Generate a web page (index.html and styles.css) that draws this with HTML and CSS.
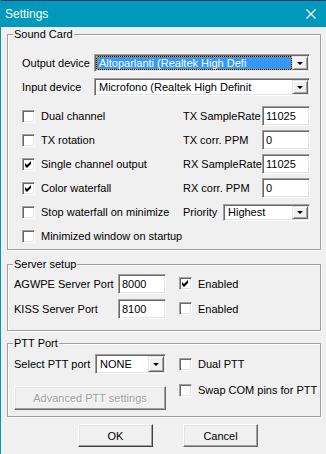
FILE: index.html
```html
<!DOCTYPE html>
<html lang="en">
<head>
    <meta charset="UTF-8">
    <title>Settings</title>
    <link rel="stylesheet" href="styles.css">
</head>
<body>

<div class="window">
    <div class="titlebar">
        <span class="title">Settings</span>
        <svg class="close" width="10" height="10" viewBox="0 0 10 10">
            <path d="M0.5 0.5 L9.5 9.5 M9.5 0.5 L0.5 9.5" stroke="#fff" stroke-width="1.2" fill="none"/>
        </svg>
    </div>

    <div class="content">
        <fieldset class="group sound">
            <legend>Sound Card</legend>
            <div class="devices">
                <div class="device-row">
                    <span class="device-label">Output device</span>
                    <div class="combo">
                        <span class="combo-value selected">Altoparlanti (Realtek High Defi</span>
                        <span class="combo-btn"><span class="arrow"></span></span>
                    </div>
                </div>
                <div class="device-row">
                    <span class="device-label">Input device</span>
                    <div class="combo">
                        <span class="combo-value">Microfono (Realtek High Definit</span>
                        <span class="combo-btn"><span class="arrow"></span></span>
                    </div>
                </div>
            </div>

            <div class="options">
                <label class="check"><span class="box"></span>Dual channel</label>
                <div class="field"><span>TX SampleRate</span><span class="edit">11025</span></div>

                <label class="check"><span class="box"></span>TX rotation</label>
                <div class="field"><span>TX corr. PPM</span><span class="edit">0</span></div>

                <label class="check"><span class="box"><svg width="9" height="9" viewBox="0 0 9 9"><path d="M1 3 L3 5 L7 1 L7 4 L3 8 L1 6 Z" fill="#000"/></svg></span>Single channel output</label>
                <div class="field"><span>RX SampleRate</span><span class="edit">11025</span></div>

                <label class="check"><span class="box"><svg width="9" height="9" viewBox="0 0 9 9"><path d="M1 3 L3 5 L7 1 L7 4 L3 8 L1 6 Z" fill="#000"/></svg></span>Color waterfall</label>
                <div class="field"><span>RX corr. PPM</span><span class="edit">0</span></div>

                <label class="check"><span class="box"></span>Stop waterfall on minimize</label>
                <div class="field">
                    <span>Priority</span>
                    <div class="combo priority">
                        <span class="combo-value">Highest</span>
                        <span class="combo-btn"><span class="arrow"></span></span>
                    </div>
                </div>

                <label class="check"><span class="box"></span>Minimized window on startup</label>
            </div>
        </fieldset>

        <fieldset class="group server">
            <legend>Server setup</legend>
            <div class="server-grid">
                <span>AGWPE Server Port</span>
                <span class="edit">8000</span>
                <label class="check"><span class="box"><svg width="9" height="9" viewBox="0 0 9 9"><path d="M1 3 L3 5 L7 1 L7 4 L3 8 L1 6 Z" fill="#000"/></svg></span>Enabled</label>

                <span>KISS Server Port</span>
                <span class="edit">8100</span>
                <label class="check"><span class="box"></span>Enabled</label>
            </div>
        </fieldset>

        <fieldset class="group ptt">
            <legend>PTT Port</legend>
            <div class="ptt-body">
                <div class="ptt-left">
                    <div class="ptt-row">
                        <span class="ptt-label">Select PTT port</span>
                        <div class="combo ptt-combo">
                            <span class="combo-value">NONE</span>
                            <span class="combo-btn"><span class="arrow"></span></span>
                        </div>
                    </div>
                    <button type="button" class="btn advanced" disabled>Advanced PTT settings</button>
                </div>
                <div class="ptt-right">
                    <label class="check"><span class="box"></span>Dual PTT</label>
                    <label class="check"><span class="box"></span>Swap COM pins for PTT</label>
                </div>
            </div>
        </fieldset>

        <div class="actions">
            <button type="button" class="btn default">OK</button>
            <button type="button" class="btn">Cancel</button>
        </div>
    </div>
</div>

</body>
</html>
```

FILE: styles.css
```css
body {
    margin: 0;
    font-family: "Liberation Sans", Arial, sans-serif;
    font-size: 11px;
    color: #000;
    background-color: #f0f0f0;
}

.window {
    width: 326px;
    height: 454px;
    box-sizing: border-box;
    border-left: 1px solid #0099bc;
    background-color: #f0f0f0;
    overflow: hidden;
}

.titlebar {
    height: 26px;
    border-top: 1px solid #1d3d6e;
    background-color: #0099bc;
    color: #fff;
    display: flex;
    align-items: center;
    justify-content: space-between;
    padding: 0 10px 0 4px;
}

.title {
    font-size: 12px;
}

.content {
    padding: 0 5px 0 6px;
}

/* group boxes */
.group {
    margin: 0;
    padding: 0;
    min-width: 0;
    border: 1px solid #a0a0a0;
    box-shadow: 1px 1px 0 #fff, inset 1px 1px 0 #fff;
}

.group legend {
    margin-left: 5px;
    padding: 0 1px;
    height: 13px;
    line-height: 13px;
    background-color: #f0f0f0;
}

.sound {
    margin-top: 1px;
    padding-bottom: 1px;
}

.server {
    margin-top: 8px;
}

.ptt {
    margin-top: 6px;
}

/* sound card */
.devices {
    padding: 10px 10px 0 14px;
}

.device-row {
    display: flex;
    align-items: center;
    height: 24px;
}

.device-label {
    width: 72px;
}

.combo {
    flex: 1;
    height: 18px;
    box-sizing: border-box;
    display: flex;
    align-items: stretch;
    background-color: #fff;
    border: 1px solid;
    border-color: #a0a0a0 #fff #fff #a0a0a0;
    box-shadow: inset 1px 1px 0 #696969, inset -1px -1px 0 #e3e3e3;
    padding: 1px;
}

.combo-value {
    flex: 1;
    min-width: 0;
    display: flex;
    align-items: center;
    padding: 0 2px;
    white-space: nowrap;
    overflow: hidden;
    border: 1px solid transparent;
}

.combo-value.selected {
    color: #fff;
    border: 1px dotted #ff9a00;
    background: linear-gradient(#3399ff, #3399ff) padding-box, #000 border-box;
}

.combo-btn {
    flex: none;
    width: 16px;
    box-sizing: border-box;
    display: flex;
    align-items: center;
    justify-content: center;
    background-color: #f0f0f0;
    border: 1px solid;
    border-color: #e3e3e3 #696969 #696969 #e3e3e3;
    box-shadow: inset 1px 1px 0 #fff, inset -1px -1px 0 #a0a0a0;
}

.arrow {
    width: 0;
    height: 0;
    border-left: 3px solid transparent;
    border-right: 3px solid transparent;
    border-top: 3px solid #000;
    margin-top: 1px;
}

.options {
    display: grid;
    grid-template-columns: 161px 1fr;
    grid-auto-rows: 24px;
    align-items: center;
    margin-top: 5px;
    padding: 0 10px 0 14px;
}

.field {
    display: flex;
    align-items: center;
}

.field .edit {
    margin-left: auto;
}

.priority {
    flex: none;
    width: 87px;
    height: 17px;
    margin-left: auto;
}

/* checkboxes */
.check {
    display: flex;
    align-items: center;
    white-space: nowrap;
}

.box {
    width: 13px;
    height: 13px;
    box-sizing: border-box;
    margin-right: 6px;
    background-color: #fff;
    border: 1px solid;
    border-color: #a0a0a0 #fff #fff #a0a0a0;
    box-shadow: inset 1px 1px 0 #696969, inset -1px -1px 0 #e3e3e3;
    display: flex;
    align-items: center;
    justify-content: center;
    flex: none;
}

/* edit boxes */
.edit {
    display: block;
    width: 48px;
    height: 20px;
    box-sizing: border-box;
    padding: 2px 3px;
    line-height: 14px;
    background-color: #fff;
    border: 1px solid;
    border-color: #a0a0a0 #fff #fff #a0a0a0;
    box-shadow: inset 1px 1px 0 #696969, inset -1px -1px 0 #e3e3e3;
}

/* server setup */
.server-grid {
    display: grid;
    grid-template-columns: 104px 61px auto;
    grid-auto-rows: 25px;
    align-items: center;
    padding: 0 0 9px 6px;
}

/* ptt */
.ptt-body {
    display: flex;
    padding: 4px 0 6px 6px;
}

.ptt-left {
    width: 152px;
}

.ptt-row {
    display: flex;
    align-items: center;
    height: 20px;
}

.ptt-label {
    width: 81px;
}

.ptt-combo {
    flex: none;
    width: 71px;
    height: 20px;
}

.ptt-right {
    margin-left: 13px;
    margin-top: -3px;
    display: flex;
    flex-direction: column;
}

.ptt-right .check {
    height: 26px;
}

/* buttons */
.btn {
    font-family: "Liberation Sans", Arial, sans-serif;
    font-size: 11px;
    color: #000;
    background-color: #f0f0f0;
    border: 1px solid;
    border-color: #fff #696969 #696969 #fff;
    box-shadow: inset -1px -1px 0 #a0a0a0, inset 1px 1px 0 #e3e3e3;
    padding: 0;
    margin: 0;
}

.advanced {
    display: block;
    width: 152px;
    height: 24px;
    margin-top: 12px;
    color: #a0a0a0;
    text-shadow: 1px 1px 0 #fff;
}

.actions {
    display: flex;
    gap: 30px;
    margin-top: 7px;
    padding-left: 71px;
}

.actions .btn {
    width: 75px;
    height: 23px;
}

.btn.default {
    border-color: #fff #404040 #404040 #fff;
}
```
